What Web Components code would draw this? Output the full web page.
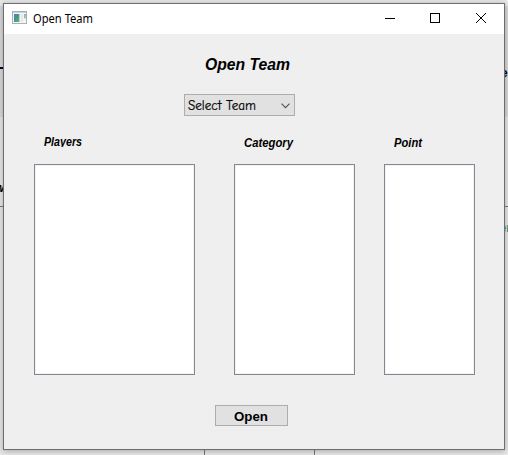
<!DOCTYPE html>
<html lang="en">
<head>
<meta charset="utf-8">
<title>Open Team</title>
<style>
html, body { margin: 0; height: 100%; overflow: hidden; }
body { font-family: "Liberation Sans", Arial, sans-serif; color: #000; }
</style>
</head>
<body>
<open-team-app></open-team-app>
<script>
const define = (name, html, setup) => customElements.define(name, class extends HTMLElement {
  connectedCallback() {
    if (this.shadowRoot) return;
    const root = this.attachShadow({ mode: 'open' });
    const t = document.createElement('template');
    t.innerHTML = html;
    root.appendChild(t.content.cloneNode(true));
    if (setup) setup(this, root);
  }
});

// Single line of text set to an exact advance width.
define('fit-text', `
<style>
:host { display: block; flex: none; }
svg { display: block; overflow: hidden; }
</style><svg><text x="1" lengthAdjust="spacingAndGlyphs"></text></svg>`, (el, root) => {
  const w = +el.getAttribute('width'), h = +el.getAttribute('height');
  const svg = root.querySelector('svg'), text = root.querySelector('text');
  svg.setAttribute('width', w + 4);
  svg.setAttribute('height', h);
  text.setAttribute('y', el.getAttribute('baseline'));
  text.setAttribute('textLength', w);
  text.textContent = el.getAttribute('text');
});

define('title-bar', `
<style>
:host { display: flex; height: 30px; background: #fff; align-items: stretch; }
.icon { margin: 7px 5px 0 8px; width: 16px; height: 14px; }
fit-text { font: 12px "Noto Sans", sans-serif; margin-top: 3px; margin-left: -1px; }
.controls { margin-left: auto; display: grid; grid-template-columns: repeat(3, 45px); }
.controls svg { width: 45px; height: 30px; display: block; }
</style>
<svg class="icon" viewBox="0 0 16 14">
<defs><linearGradient id="g" x2=".7" y2="1"><stop stop-color="#4c83bd"/><stop offset=".5" stop-color="#4a8f9b"/><stop offset="1" stop-color="#58b368"/></linearGradient></defs>
<rect x=".5" y=".5" width="14" height="12" fill="#f4f5f5" stroke="#abb0b3"/>
<path d="M1 1.500h13" stroke="#ccd1d4"/>
<rect x="2" y="3" width="5" height="8" fill="url(#g)"/>
<rect x="7" y="3" width="1" height="8" fill="#b4d3cc"/>
<rect x="9" y="3" width="2" height="8" fill="#e3e5e6"/>
<rect x="12" y="3" width="2" height="4" fill="#8fb9c4"/><path d="M12 8l2-3v3z" fill="#b8dcc0"/>
</svg>
<fit-text text="Open Team" width="60" height="24" baseline="16"></fit-text>
<div class="controls">
<svg fill="none" stroke="#000" shape-rendering="crispEdges"><path d="M16 14.500h10"/></svg>
<svg fill="none" stroke="#000" shape-rendering="crispEdges"><rect x="16.500" y="9.500" width="9" height="9"/></svg>
<svg fill="none" stroke="#000"><path d="M17 9l10 10M27 9l-10 10"/></svg>
</div>`);

define('team-select', `
<style>
:host { display: flex; box-sizing: border-box; width: 111px; height: 22px; border: 1px solid #adadad; background: #e1e1e1; justify-content: space-between; }
fit-text { font: 13px "Comic Sans MS", "Comic Neue", "Open Sans", sans-serif; margin-left: 2px; stroke: #000; stroke-width: .2px; }
svg.chev { width: 9px; height: 6px; margin: 8px 4px 0 0; }
</style>
<fit-text text="Select Team" width="68" height="20" baseline="15"></fit-text>
<svg class="chev" fill="none" stroke="#505050" stroke-width="1.100"><path d="M.5 .7L4.500 4.700L8.500 .7"/></svg>`);

define('list-box', `
<style>
:host { display: block; box-sizing: border-box; height: 211px; border: 1px solid #828790; background: #fff; box-shadow: inset 0 0 0 1px #f2f3f4; }
</style>`);

define('push-button', `
<style>
:host { display: flex; box-sizing: border-box; width: 73px; height: 21px; border: 1px solid #adadad; background: #e1e1e1; justify-content: center; font: bold 13px "Liberation Sans", sans-serif; }
</style><slot></slot>`);

define('app-window', `
<style>
:host { display: flex; flex-direction: column; box-sizing: border-box; width: 502px; height: 447px; border: 1px solid #6f6d6f; background: #efefef; box-shadow: 0 1px 6px rgba(0,0,0,.3); position: relative; }
main { display: flex; flex-direction: column; }
</style><title-bar></title-bar><main><slot></slot></main>`);

// Edges of the page lying behind the window.
define('page-behind', `
<style>
:host { position: absolute; inset: 0; background: #e9e8e9; overflow: hidden; }
.band { position: absolute; left: 0; right: 0; top: 6px; height: 111px; background: #dadada; }
svg { position: absolute; inset: 0; }
</style><div class="band"></div>
<svg width="508" height="455" font-family="Liberation Sans" font-weight="bold">
<path d="M0 206.500H508M204.500 440V455M314.500 440V455" stroke="#77777d"/>
<path d="M0 68h4" stroke="#000030" stroke-width="2"/>
<text x="500.500" y="77" font-size="13">e</text>
<text x="-5" y="192" font-size="12" font-style="italic">w</text>
<text x="499.500" y="232" font-size="12" fill="#159b7c">er</text>
</svg>`);

define('open-team-app', `
<style>
:host { display: block; position: relative; width: 508px; height: 455px; overflow: hidden; }
app-window { margin: 3px; }
.heading { font: italic bold 16px "Liberation Sans", sans-serif; margin: 17px 0 0 199.500px; }
team-select { margin: 18px 0 0 180px; }
.columns { display: grid; grid-template-columns: 161px 121px 91px; margin: 16px 29px 0 30px; justify-content: space-between; }
.columns > section:nth-child(2) { margin: 0 -5px 0 5px; }
.columns fit-text { font: italic bold 12px "Liberation Sans", sans-serif; margin-left: 9px; height: 32px; }
push-button { margin: 30px 0 0 211px; }
</style>
<page-behind></page-behind>
<app-window>
<fit-text class="heading" text="Open Team" width="85" height="25" baseline="19"></fit-text>
<team-select></team-select>
<div class="columns">
<section><fit-text text="Players" width="38" height="15" baseline="14"></fit-text><list-box></list-box></section>
<section><fit-text text="Category" width="49" height="20" baseline="15"></fit-text><list-box></list-box></section>
<section><fit-text text="Point" width="28" height="20" baseline="15"></fit-text><list-box></list-box></section>
</div>
<push-button><fit-text text="Open" width="34" height="19" baseline="15"></fit-text></push-button>
</app-window>`);
</script>
</body>
</html>
